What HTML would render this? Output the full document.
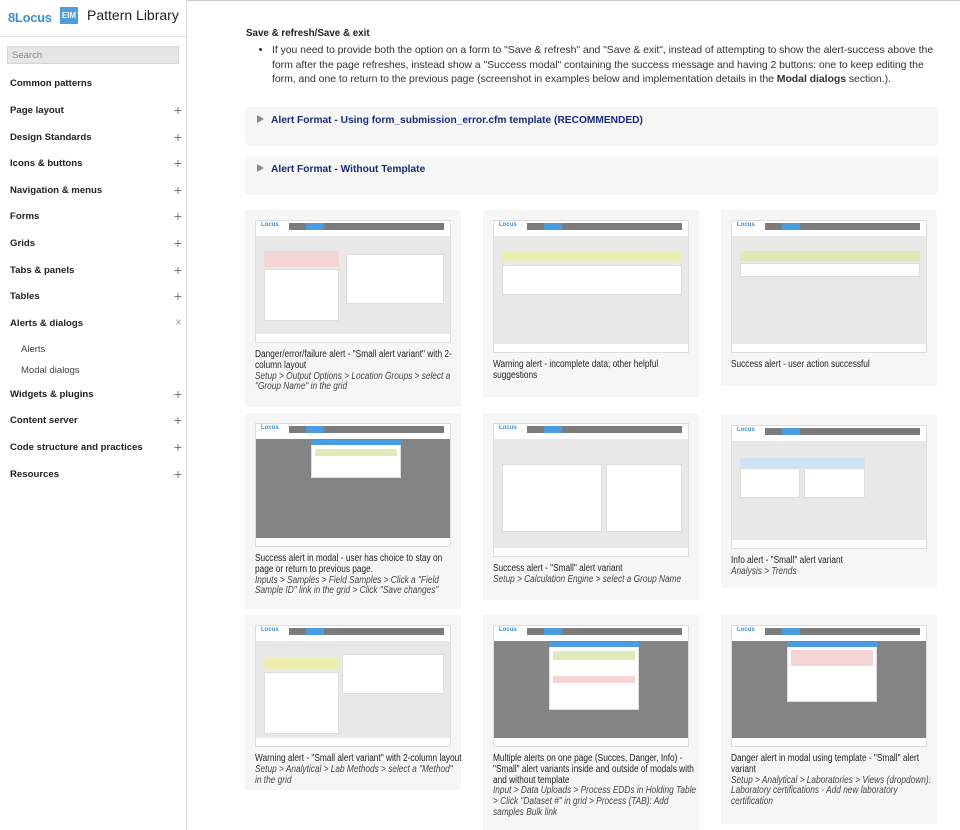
<!DOCTYPE html>
<html><head><meta charset="utf-8"><style>
*{box-sizing:border-box;margin:0;padding:0}
body{width:960px;height:830px;overflow:hidden;background:#fff;font-family:"Liberation Sans",Arial,sans-serif;color:#222;position:relative}
.side{position:absolute;left:0;top:0;width:187px;height:830px;border-right:1px solid #ddd;background:#fff}
.hdr{height:37px;border-bottom:1px solid #ddd;position:relative}
.logo{position:absolute;left:8px;top:10px;font-weight:bold;color:#3a8fd6;font-size:13px;letter-spacing:-.3px}
.eim{position:absolute;left:60px;top:7px;width:18px;height:17px;background:#4a9de0;color:#fff;font-size:8px;font-weight:bold;text-align:center;line-height:17px}
.title{position:absolute;left:87px;top:7px;font-size:14px;color:#222}
.search{position:absolute;left:7px;top:46px;width:172px;height:18px;background:#e6e6e6;border:1px solid #d6d6d6;font-size:9.5px;color:#888;padding:3px 4px}
.nav{position:absolute;left:10px;font-size:9.6px;font-weight:bold;color:#222;width:172px}
.nav span{position:absolute;right:0;top:-3px;font-weight:normal;font-size:14px;color:#777}
.sub{position:absolute;left:21px;font-size:9.5px;color:#444}
.topline{position:absolute;left:187px;top:0;width:773px;height:1px;background:#ccc}
.main{position:absolute;left:246px;top:0;width:692px;font-size:10.5px;color:#333}
h4{position:absolute;top:28px;left:0;font-size:9.8px;font-weight:bold;color:#222}
ul{position:absolute;top:43px;left:26px;width:700px;line-height:14.5px;white-space:nowrap;letter-spacing:-0.06px}
.acc{position:absolute;left:245px;width:693px;height:39px;background:#f6f6f6;border-radius:4px;font-size:10.2px;font-weight:bold;color:#1a2a80;padding:8px 0 0 12px}
.acc:before{content:"";display:inline-block;border-left:7px solid #888;border-top:4px solid transparent;border-bottom:4px solid transparent;margin-right:7px}
.card{position:absolute;width:216px;background:#f6f6f6;padding:10px}
.shot{width:196px;background:#e8e8e8;border:1px solid #ddd;position:relative;overflow:hidden}
.bar{position:absolute;left:0;top:0;right:0;height:15px;background:#fff}
.bar i{position:absolute;left:33px;right:6px;top:2px;height:7px;background:#7c7c7c}
.bar b{position:absolute;left:50px;width:18px;top:2px;height:7px;background:#4a9de0}
.bar em{position:absolute;left:5px;top:1px;font-size:6px;color:#3a8fd6;font-weight:bold;font-style:normal}
.foot{position:absolute;left:0;right:0;bottom:0;height:8px;background:#fff}
.pn{position:absolute;background:#fff;border:1px solid #ddd}
.al{position:absolute;height:8px}
.ov{position:absolute;left:0;right:0;top:15px;bottom:8px;background:rgba(90,90,90,.7)}
.cap{font-size:9.9px;line-height:10.8px;color:#222;margin-top:7px;white-space:nowrap;transform:scaleX(.84);transform-origin:0 0}
.cap i{color:#444}
</style></head><body>
<div class="topline"></div>
<div class="side">
<div class="hdr"><div class="logo">8Locus</div><div class="eim">EIM</div><div class="title">Pattern Library</div></div>
<div class="search">Search</div>
<div class="nav" style="top:78px">Common patterns</div>
<div class="nav" style="top:105px">Page layout<span>+</span></div>
<div class="nav" style="top:132px">Design Standards<span>+</span></div>
<div class="nav" style="top:158px">Icons &amp; buttons<span>+</span></div>
<div class="nav" style="top:185px">Navigation &amp; menus<span>+</span></div>
<div class="nav" style="top:211px">Forms<span>+</span></div>
<div class="nav" style="top:238px">Grids<span>+</span></div>
<div class="nav" style="top:265px">Tabs &amp; panels<span>+</span></div>
<div class="nav" style="top:291px">Tables<span>+</span></div>
<div class="nav" style="top:318px">Alerts &amp; dialogs<span style="font-size:12px;color:#aaa">×</span></div>
<div class="sub" style="top:344px">Alerts</div>
<div class="sub" style="top:365px">Modal dialogs</div>
<div class="nav" style="top:389px">Widgets &amp; plugins<span>+</span></div>
<div class="nav" style="top:415px">Content server<span>+</span></div>
<div class="nav" style="top:442px">Code structure and practices<span>+</span></div>
<div class="nav" style="top:469px">Resources<span>+</span></div>
</div>
<div class="main">
<h4>Save &amp; refresh/Save &amp; exit</h4>
<ul><li>If you need to provide both the option on a form to "Save &amp; refresh" and "Save &amp; exit", instead of attempting to show the alert-success above the<br>form after the page refreshes, instead show a "Success modal" containing the success message and having 2 buttons: one to keep editing the<br>form, and one to return to the previous page (screenshot in examples below and implementation details in the <b>Modal dialogs</b> section.).</li></ul>
</div>
<div class="acc" style="top:107px">Alert Format - Using form_submission_error.cfm template (RECOMMENDED)</div>
<div class="acc" style="top:156px">Alert Format - Without Template</div>

<div class="card" style="left:245px;top:210px;height:197px"><div class="shot" style="height:123px"><div class="bar"><em>Locus</em><i></i><b></b></div><div class="al" style="left:8px;top:30px;width:75px;height:16px;background:#f4d4d4"></div><div class="pn" style="left:8px;top:48px;width:75px;height:52px"></div><div class="pn" style="left:90px;top:33px;width:98px;height:50px"></div><div class="foot"></div></div>
<div class="cap">Danger/error/failure alert - "Small alert variant" with 2-<br>column layout<br><i>Setup &gt; Output Options &gt; Location Groups &gt; select a<br>"Group Name" in the grid</i></div></div>

<div class="card" style="left:483px;top:210px;height:187px"><div class="shot" style="height:133px"><div class="bar"><em>Locus</em><i></i><b></b></div><div class="al" style="left:8px;top:30px;width:180px;height:11px;background:#ecedb0"></div><div class="pn" style="left:8px;top:44px;width:180px;height:30px"></div><div class="foot"></div></div>
<div class="cap">Warning alert - incomplete data; other helpful<br>suggestions</div></div>

<div class="card" style="left:721px;top:210px;height:176px"><div class="shot" style="height:133px"><div class="bar"><em>Locus</em><i></i><b></b></div><div class="al" style="left:8px;top:30px;width:180px;height:10px;background:#dfeab8"></div><div class="pn" style="left:8px;top:42px;width:180px;height:14px"></div><div class="foot"></div></div>
<div class="cap">Success alert - user action successful</div></div>

<div class="card" style="left:245px;top:413px;height:196px"><div class="shot" style="height:124px"><div class="bar"><em>Locus</em><i></i><b></b></div><div class="ov"></div><div class="pn" style="left:55px;top:16px;width:90px;height:38px"></div><div class="al" style="left:55px;top:16px;width:90px;height:5px;background:#4a9de0"></div><div class="al" style="left:59px;top:25px;width:82px;height:7px;background:#dfeab8"></div><div class="foot"></div></div>
<div class="cap">Success alert in modal - user has choice to stay on<br>page or return to previous page.<br><i>Inputs &gt; Samples &gt; Field Samples &gt; Click a "Field<br>Sample ID" link in the grid &gt; Click "Save changes"</i></div></div>

<div class="card" style="left:483px;top:413px;height:187px"><div class="shot" style="height:134px"><div class="bar"><em>Locus</em><i></i><b></b></div><div class="pn" style="left:8px;top:40px;width:100px;height:68px"></div><div class="pn" style="left:112px;top:40px;width:76px;height:68px"></div><div class="foot"></div></div>
<div class="cap">Success alert - "Small" alert variant<br><i>Setup &gt; Calculation Engine &gt; select a Group Name</i></div></div>

<div class="card" style="left:721px;top:415px;height:173px"><div class="shot" style="height:124px"><div class="bar"><em>Locus</em><i></i><b></b></div><div class="al" style="left:8px;top:32px;width:125px;height:10px;background:#cfe3f2"></div><div class="pn" style="left:8px;top:42px;width:60px;height:30px"></div><div class="pn" style="left:72px;top:42px;width:61px;height:30px"></div><div class="foot"></div></div>
<div class="cap">Info alert - "Small" alert variant<br><i>Analysis &gt; Trends</i></div></div>

<div class="card" style="left:245px;top:615px;height:175px"><div class="shot" style="height:122px"><div class="bar"><em>Locus</em><i></i><b></b></div><div class="al" style="left:8px;top:32px;width:75px;height:12px;background:#ecedb0"></div><div class="pn" style="left:8px;top:46px;width:75px;height:62px"></div><div class="pn" style="left:86px;top:28px;width:102px;height:40px"></div><div class="foot"></div></div>
<div class="cap">Warning alert - "Small alert variant" with 2-column layout<br><i>Setup &gt; Analytical &gt; Lab Methods &gt; select a "Method"<br>in the grid</i></div></div>

<div class="card" style="left:483px;top:615px;height:215px"><div class="shot" style="height:122px"><div class="bar"><em>Locus</em><i></i><b></b></div><div class="ov"></div><div class="pn" style="left:55px;top:16px;width:90px;height:68px"></div><div class="al" style="left:55px;top:16px;width:90px;height:5px;background:#4a9de0"></div><div class="al" style="left:59px;top:25px;width:82px;height:9px;background:#dfeab8"></div><div class="al" style="left:59px;top:50px;width:82px;height:7px;background:#f4d4d4"></div><div class="foot"></div></div>
<div class="cap">Multiple alerts on one page (Succes, Danger, Info) -<br>"Small" alert variants inside and outside of modals with<br>and without template<br><i>Input &gt; Data Uploads &gt; Process EDDs in Holding Table<br>&gt; Click "Dataset #" in grid &gt; Process (TAB): Add<br>samples Bulk link</i></div></div>

<div class="card" style="left:721px;top:615px;height:209px"><div class="shot" style="height:122px"><div class="bar"><em>Locus</em><i></i><b></b></div><div class="ov"></div><div class="pn" style="left:55px;top:16px;width:90px;height:60px"></div><div class="al" style="left:55px;top:16px;width:90px;height:5px;background:#4a9de0"></div><div class="al" style="left:59px;top:24px;width:82px;height:16px;background:#f4d4d4"></div><div class="foot"></div></div>
<div class="cap">Danger alert in modal using template - "Small" alert<br>variant<br><i>Setup &gt; Analytical &gt; Laboratories &gt; Views (dropdown):<br>Laboratory certifications - Add new laboratory<br>certification</i></div></div>
</body></html>
